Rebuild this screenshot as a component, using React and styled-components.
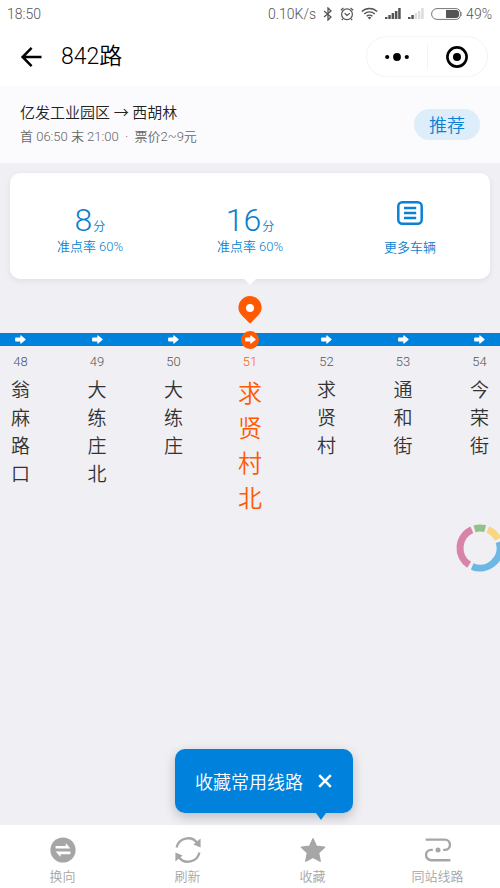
import { useState } from "react"
import styled, { createGlobalStyle } from "styled-components"

const GlobalStyle = createGlobalStyle`
  * {
    box-sizing: border-box;
  }
  body {
    margin: 0;
    background: #f0eff4;
    font-family: Roboto, "Noto Sans CJK SC", sans-serif;
    font-weight: 350;
    color: #333;
  }
  button {
    margin: 0;
    padding: 0;
    border: 0;
    background: none;
    font: inherit;
    color: inherit;
    cursor: pointer;
  }
  h1, h2, p {
    margin: 0;
    font-weight: 350;
  }
  svg {
    display: block;
    flex: none;
  }
`

const Page = styled.div`
  position: relative;
  display: flex;
  flex-direction: column;
  min-height: 100vh;
  overflow: hidden;
`

const StatusBar = styled.div`
  display: flex;
  align-items: center;
  justify-content: space-between;
  height: 27px;
  padding: 0 8px 0 7px;
  background: #fff;
  color: #555;
  font-size: 14px;
`

const StatusIcons = styled.div`
  display: flex;
  align-items: center;
  gap: 7px;
`

const Battery = styled.div`
  display: flex;
  align-items: center;
  gap: 4px;
`

const NavBar = styled.header`
  display: flex;
  align-items: center;
  height: 59px;
  padding: 0 12px 0 20px;
  background: #fff;
  color: #000;

  h1 {
    flex: 1;
    padding-left: 18px;
    font-size: 23px;
    line-height: 30px;
  }
`

const Capsule = styled.div`
  display: flex;
  align-items: center;
  width: 122px;
  height: 41px;
  border: 1px solid #f4f4f4;
  border-radius: 21px;

  button {
    display: flex;
    flex: 1;
    align-items: center;
    justify-content: center;
    height: 26px;
  }
  button + button {
    border-left: 1px solid #f4f4f4;
  }
`

const RouteInfo = styled.section`
  display: flex;
  align-items: center;
  justify-content: space-between;
  height: 77px;
  padding: 0 20px;
  background: #fbfbfd;

  h2 {
    font-size: 15px;
    line-height: 24px;
    color: #222;
  }
  p {
    font-size: 13px;
    line-height: 24px;
    color: #666;
  }
`

const Recommend = styled.button`
  width: 66px;
  height: 31px;
  border-radius: 16px;
  background: #deedfa;
  color: #0a80d6;
  font-size: 18px;
  line-height: 33px;
`

const Card = styled.section`
  position: relative;
  display: flex;
  height: 106px;
  margin: 10px 10px 0;
  border-radius: 10px;
  background: #fff;
  box-shadow: 0 2px 6px rgba(0, 0, 0, 0.07);
  color: #0a7fce;

  &::after {
    content: "";
    position: absolute;
    top: 100%;
    left: 50%;
    margin-left: -6px;
    border: 6px solid transparent;
    border-top-color: #fff;
    border-bottom: 0;
  }
`

const Arrival = styled.div`
  display: flex;
  flex: 1;
  flex-direction: column;
  align-items: center;
  padding-top: 29px;
  font-size: 13px;
  line-height: 18px;
`

const Minutes = styled.div`
  height: 36px;
  font-size: 12px;
  line-height: 36px;

  strong {
    margin-right: 1px;
    font-size: 32px;
    font-weight: 300;
  }
`

const MoreButton = styled.button`
  display: flex;
  flex: 1;
  flex-direction: column;
  align-items: center;
  gap: 14px;
  padding-top: 28px;
  font-size: 13px;
  line-height: 18px;
`

const LineMap = styled.main`
  flex: 1;
  padding-top: 17px;
`

const Pin = styled.div`
  display: flex;
  justify-content: center;
  height: 37px;
`

const Stations = styled.div`
  display: flex;
  justify-content: center;
`

const StationItem = styled.button`
  display: flex;
  flex: 0 0 15.3%;
  flex-direction: column;
  align-items: center;
  color: ${(p) => (p.$active ? "#ff5a00" : "#333")};
`

const Track = styled.span`
  display: flex;
  align-items: center;
  justify-content: center;
  width: 100%;
  height: 13px;
  background: #0082dc;
`

const Marker = styled.span`
  display: flex;
  flex: none;
  align-items: center;
  justify-content: center;
  width: 18px;
  height: 18px;
  border-radius: 50%;
  background: ${(p) => (p.$active ? "#ff5a00" : "transparent")};
`

const Num = styled.span`
  padding: 8px 0 7px;
  font-size: 13px;
  font-weight: 300;
  line-height: 16px;
  color: ${(p) => (p.$active ? "#ff5a00" : "#555")};
`

// one character per line
const Name = styled.span`
  width: 1em;
  font-size: ${(p) => (p.$active ? 24 : 19)}px;
  line-height: ${(p) => (p.$active ? 35 : 28)}px;
  word-break: break-all;
`

const Ring = styled.div`
  position: absolute;
  right: 0;
  bottom: 316px;
  width: 44px;
  overflow: hidden;
`

const Tip = styled.div`
  position: absolute;
  bottom: 75px;
  left: 35%;
  display: flex;
  align-items: center;
  justify-content: space-between;
  width: 178px;
  height: 64px;
  padding: 0 21px 0 20px;
  border-radius: 10px;
  background: #0082dc;
  box-shadow: 0 4px 12px rgba(0, 0, 0, 0.22);
  color: #fff;
  font-size: 18px;

  &::after {
    content: "";
    position: absolute;
    top: 100%;
    right: 27px;
    border: 5px solid transparent;
    border-top: 7px solid #0082dc;
    border-bottom: 0;
  }
`

const TabBar = styled.nav`
  display: flex;
  height: 63px;
  background: #fff;
`

const Tab = styled.button`
  display: flex;
  flex: 1;
  flex-direction: column;
  align-items: center;
  gap: 5px;
  padding-top: 12px;
  color: #a6a6a6;
  font-size: 13px;
  line-height: 18px;
`

const BluetoothIcon = () => (
  <svg width="10" height="14" viewBox="0 0 10 14" fill="none" stroke="#555" strokeWidth="1.3">
    <path d="M1 4l7 6-3 3V1l3 3-7 6" />
  </svg>
)

const AlarmIcon = () => (
  <svg width="14" height="14" viewBox="0 0 14 14" fill="none" stroke="#555" strokeWidth="1.2">
    <circle cx="7" cy="7.3" r="5.4" />
    <path d="M4.6 6.2L7 8.4l2.8-2.2M.8 3.2L3.4 1M13.2 3.2L10.6 1M3 11.8L1.8 13M11 11.8l1.2 1.2" />
  </svg>
)

const WifiIcon = () => (
  <svg width="17" height="13" viewBox="0 0 17 13" fill="none" stroke="#555" strokeWidth="1.4">
    <path d="M.8 4.6a11 11 0 0 1 15.4 0M3.2 7a7.6 7.6 0 0 1 10.6 0M5.6 9.3a4.2 4.2 0 0 1 5.8 0" />
    <path d="M8.5 12.6l-1.8-2a2.6 2.6 0 0 1 3.6 0z" fill="#555" stroke="none" />
  </svg>
)

const SignalIcon = ({ level }) => (
  <svg width="16" height="11" viewBox="0 0 16 11">
    {[2, 4, 6, 8, 11].map((h, i) => (
      <rect key={h} x={i * 3.3} y={11 - h} width="2.5" height={h} fill={i < level ? "#555" : "#dcdcdc"} />
    ))}
  </svg>
)

const BatteryIcon = () => (
  <svg width="31" height="12" viewBox="0 0 31 12">
    <path d="M6 .6h19a4.4 4.4 0 0 1 4.4 4.4v2a4.4 4.4 0 0 1-4.4 4.4H6A5.4 5.4 0 0 1 6 .6z" fill="#fff" stroke="#777" />
    <path d="M15 2h10a3 3 0 0 1 3 3v2a3 3 0 0 1-3 3H15z" fill="#555" />
    <path d="M30 4v4" stroke="#777" />
  </svg>
)

const BackIcon = () => (
  <svg width="23" height="20" viewBox="0 0 23 20" fill="none" stroke="#000" strokeWidth="2.5">
    <path d="M21.5 10H2.5M11.6 .9L2.6 10l9 9.1" />
  </svg>
)

const DotsIcon = () => (
  <svg width="24" height="8" viewBox="0 0 24 8">
    <circle cx="2.2" cy="4" r="2.1" />
    <circle cx="12" cy="4" r="3.9" />
    <circle cx="21.8" cy="4" r="2.1" />
  </svg>
)

const TargetIcon = () => (
  <svg width="22" height="22" viewBox="0 0 22 22">
    <circle cx="11" cy="11" r="9.6" fill="none" stroke="#000" strokeWidth="2.6" />
    <circle cx="11" cy="11" r="4" />
  </svg>
)

const ListIcon = () => (
  <svg width="26" height="24" viewBox="0 0 26 24" fill="none" stroke="#0a80d6" strokeWidth="2.5">
    <rect x="1.3" y="1.3" width="23.4" height="21.4" rx="4" />
    <path d="M7 7h12.2M7 12h12.2M7 17h12.2" />
  </svg>
)

const PinIcon = () => (
  <svg width="24" height="28" viewBox="0 0 24 28">
    <path d="M12 0a11.6 11.6 0 0 0-11.6 11.6c0 5 3.4 7.8 6.8 11.2l4 4.2q.8.8 1.6 0l4-4.2c3.4-3.4 6.8-6.2 6.8-11.2A11.6 11.6 0 0 0 12 0z" fill="#ff5a00" />
    <circle cx="12" cy="12" r="4" fill="#fff" />
  </svg>
)

const ArrowIcon = () => (
  <svg width="11" height="9" viewBox="0 0 11 9">
    <path d="M1 2.6h4.3V.9q0-.9.9-.4l4.2 3.4q.6.6 0 1.2L6.2 8.5q-.9.5-.9-.4V6.4H1q-.9 0-.9-.9v-2q0-.9.9-.9z" fill="#fff" />
  </svg>
)

const CloseIcon = () => (
  <svg width="14" height="14" viewBox="0 0 14 14" fill="none" stroke="#fff" strokeWidth="2.5">
    <path d="M1.2 1.2l11.6 11.6M12.8 1.2L1.2 12.8" />
  </svg>
)

const SwapIcon = () => (
  <svg width="26" height="26" viewBox="0 0 26 26">
    <circle cx="13" cy="13" r="12.6" fill="#a6a6a6" />
    <path d="M5.6 11.6h14.8L15.8 6v3H5.6zM20.4 14.6H5.6L10.6 20v-2.8h9.8z" fill="#fff" />
  </svg>
)

const RefreshIcon = () => (
  <svg width="26" height="26" viewBox="0 0 26 26" fill="none" stroke="#a6a6a6" strokeWidth="2.3">
    <path d="M1.6 10.6A11.7 11.7 0 0 1 22.4 6M24.4 15.4A11.7 11.7 0 0 1 3.6 20" />
    <path d="M25.6 1.6v9l-7.2-3zM.4 24.4v-9l7.2 3z" fill="#a6a6a6" stroke="none" />
  </svg>
)

const StarIcon = () => (
  <svg width="26" height="26" viewBox="0 0 26 26">
    <path d="M13 1.8l3.4 7.4 8.2 1-6 5.6 1.6 8.4L13 20.4l-7.2 3.8 1.6-8.4-6-5.6 8.2-1z" fill="#a6a6a6" stroke="#a6a6a6" strokeWidth="1.4" strokeLinejoin="round" />
  </svg>
)

const LinesIcon = () => (
  <svg width="26" height="26" viewBox="0 0 26 26" fill="none" stroke="#a6a6a6" strokeWidth="2.4">
    <path d="M.6 2.6h19.2a5.1 5.1 0 0 1 0 10.3h-1.6M25.4 23.2H6.2a5.1 5.1 0 0 1 0-10.3h1.6" />
    <circle cx="13" cy="12.9" r="2.5" fill="#a6a6a6" stroke="none" />
  </svg>
)

const segments = [
  { from: -16, to: 15, color: "#93c288" },
  { from: 23, to: 64, color: "#f9d684" },
  { from: 72, to: 203, color: "#6cb8e4" },
  { from: 213, to: 336, color: "#d983ab" },
]

function arc(from, to) {
  const point = (deg) => {
    const a = (deg * Math.PI) / 180
    return `${24 + 20 * Math.sin(a)} ${24 - 20 * Math.cos(a)}`
  }
  return `M${point(from)}A20 20 0 0 1 ${point(to)}`
}

const RingIcon = () => (
  <svg width="48" height="48" viewBox="0 0 48 48" fill="none">
    {segments.map((s) => (
      <path key={s.color} d={arc(s.from, s.to)} stroke={s.color} strokeWidth="7" />
    ))}
  </svg>
)

const stations = [
  { num: 48, name: "翁麻路口" },
  { num: 49, name: "大练庄北" },
  { num: 50, name: "大练庄" },
  { num: 51, name: "求贤村北" },
  { num: 52, name: "求贤村" },
  { num: 53, name: "通和街" },
  { num: 54, name: "今荣街" },
]

const arrivals = [
  { minutes: 8, rate: "60%" },
  { minutes: 16, rate: "60%" },
]

const tabs = [
  { label: "换向", Icon: SwapIcon },
  { label: "刷新", Icon: RefreshIcon },
  { label: "收藏", Icon: StarIcon },
  { label: "同站线路", Icon: LinesIcon },
]

const App = () => {
  const [current, setCurrent] = useState(51)
  const [showTip, setShowTip] = useState(true)

  return (
    <Page>
      <GlobalStyle />
      <StatusBar>
        <span>18:50</span>
        <StatusIcons>
          <span>0.10K/s</span>
          <BluetoothIcon />
          <AlarmIcon />
          <WifiIcon />
          <SignalIcon level={5} />
          <SignalIcon level={2} />
          <Battery>
            <BatteryIcon />
            <span>49%</span>
          </Battery>
        </StatusIcons>
      </StatusBar>

      <NavBar>
        <button type="button" aria-label="返回"><BackIcon /></button>
        <h1>842路</h1>
        <Capsule>
          <button type="button" aria-label="更多"><DotsIcon /></button>
          <button type="button" aria-label="关闭"><TargetIcon /></button>
        </Capsule>
      </NavBar>

      <RouteInfo>
        <div>
          <h2>亿发工业园区 → 西胡林</h2>
          <p>首 06:50 末 21:00 &nbsp;·&nbsp; 票价2~9元</p>
        </div>
        <Recommend type="button">推荐</Recommend>
      </RouteInfo>

      <Card>
        {arrivals.map((a) => (
          <Arrival key={a.minutes}>
            <Minutes><strong>{a.minutes}</strong>分</Minutes>
            <span>准点率 {a.rate}</span>
          </Arrival>
        ))}
        <MoreButton type="button">
          <ListIcon />
          更多车辆
        </MoreButton>
      </Card>

      <LineMap>
        <Pin><PinIcon /></Pin>
        <Stations>
          {stations.map((s) => {
            const active = s.num === current
            return (
              <StationItem key={s.num} type="button" $active={active} onClick={() => setCurrent(s.num)}>
                <Track>
                  <Marker $active={active}><ArrowIcon /></Marker>
                </Track>
                <Num $active={active}>{s.num}</Num>
                <Name $active={active}>{s.name}</Name>
              </StationItem>
            )
          })}
        </Stations>
      </LineMap>

      <Ring><RingIcon /></Ring>

      {showTip && (
        <Tip>
          <span>收藏常用线路</span>
          <button type="button" aria-label="关闭提示" onClick={() => setShowTip(false)}><CloseIcon /></button>
        </Tip>
      )}

      <TabBar>
        {tabs.map(({ label, Icon }) => (
          <Tab key={label} type="button">
            <Icon />
            {label}
          </Tab>
        ))}
      </TabBar>
    </Page>
  )
}

export default App
